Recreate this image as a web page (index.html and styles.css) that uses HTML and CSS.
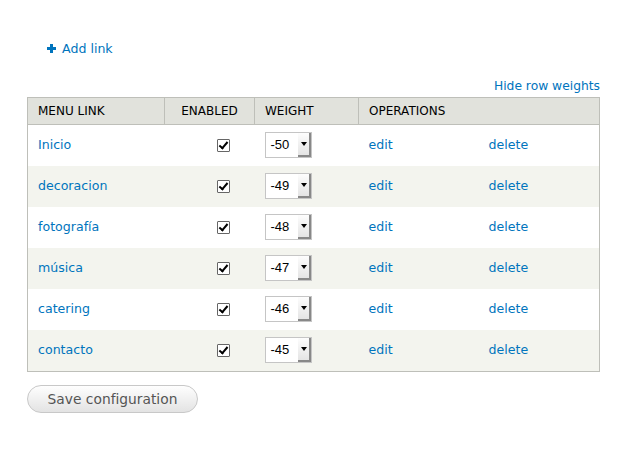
FILE: index.html
```html
<!DOCTYPE html>
<html lang="es">
<head>
    <meta charset="UTF-8">
    <title>Menu</title>
    <link rel="stylesheet" href="styles.css">
</head>
<body>

<main class="page">
    <ul class="action-links">
        <li>
            <a href="#" class="add-link">
                <svg class="plus" width="9" height="9" viewBox="0 0 9 9"><path d="M3 0h3v3h3v3H6v3H3V6H0V3h3z" fill="#0074bd"/></svg>
                Add link
            </a>
        </li>
    </ul>

    <div class="toggle-weights"><a href="#">Hide row weights</a></div>

    <table class="menu-table">
        <thead>
            <tr>
                <th class="col-link">Menu link</th>
                <th class="col-enabled">Enabled</th>
                <th class="col-weight">Weight</th>
                <th class="col-ops" colspan="2">Operations</th>
            </tr>
        </thead>
        <tbody>
            <tr>
                <td><a href="#">Inicio</a></td>
                <td class="center"><span class="check"></span></td>
                <td><span class="select">-50<i></i></span></td>
                <td><a href="#">edit</a></td>
                <td><a href="#">delete</a></td>
            </tr>
            <tr class="even">
                <td><a href="#">decoracion</a></td>
                <td class="center"><span class="check"></span></td>
                <td><span class="select">-49<i></i></span></td>
                <td><a href="#">edit</a></td>
                <td><a href="#">delete</a></td>
            </tr>
            <tr>
                <td><a href="#">fotografía</a></td>
                <td class="center"><span class="check"></span></td>
                <td><span class="select">-48<i></i></span></td>
                <td><a href="#">edit</a></td>
                <td><a href="#">delete</a></td>
            </tr>
            <tr class="even">
                <td><a href="#">música</a></td>
                <td class="center"><span class="check"></span></td>
                <td><span class="select">-47<i></i></span></td>
                <td><a href="#">edit</a></td>
                <td><a href="#">delete</a></td>
            </tr>
            <tr>
                <td><a href="#">catering</a></td>
                <td class="center"><span class="check"></span></td>
                <td><span class="select">-46<i></i></span></td>
                <td><a href="#">edit</a></td>
                <td><a href="#">delete</a></td>
            </tr>
            <tr class="even">
                <td><a href="#">contacto</a></td>
                <td class="center"><span class="check"></span></td>
                <td><span class="select">-45<i></i></span></td>
                <td><a href="#">edit</a></td>
                <td><a href="#">delete</a></td>
            </tr>
        </tbody>
    </table>

    <button type="button" class="save">Save configuration</button>
</main>

</body>
</html>
```

FILE: styles.css
```css
body {
    margin: 0;
    font-family: "DejaVu Sans", sans-serif;
    font-size: 12.6px;
    color: #333;
    background: #fff;
}
a {
    color: #0074bd;
    text-decoration: none;
}
.page {
    padding: 0 32px 0 27px;
}
.action-links {
    list-style: none;
    margin: 0;
    padding: 41px 0 0 20px;
    height: 39px;
}
.add-link {
    display: flex;
    align-items: center;
    gap: 6px;
}
.toggle-weights {
    text-align: right;
    height: 17px;
    line-height: 13px;
    font-size: 12.3px;
}
.menu-table {
    width: 573px;
    border-collapse: collapse;
    border: 1px solid #bebfb9;
}
.menu-table th {
    background: #e1e2dc;
    font-weight: normal;
    text-transform: uppercase;
    color: #000;
    font-size: 12px;
    text-align: left;
    height: 26px;
    padding: 0 10px;
    border-right: 1px solid #bebfb9;
    border-bottom: 1px solid #bebfb9;
}
.menu-table th.col-enabled {
    text-align: center;
}
.menu-table th.col-link { width: 116px; }
.menu-table th.col-enabled { width: 69px; }
.menu-table th.col-weight { width: 83px; }
.menu-table td {
    height: 39px;
    padding: 0 10px 2px;
    vertical-align: middle;
}
.menu-table td:nth-child(4) {
    width: 100px;
}
.menu-table tr.even td {
    background: #f3f4ee;
}
.menu-table td.center {
    text-align: right;
    padding-right: 25px;
}
.check {
    display: inline-block;
    vertical-align: middle;
    width: 11px;
    height: 11px;
    border: 1px solid #666;
    border-radius: 1px;
    background: #fff;
    position: relative;
}
.check::after {
    content: "";
    position: absolute;
    left: 3px;
    top: 0px;
    width: 3px;
    height: 7px;
    border: solid #000;
    border-width: 0 2px 2px 0;
    transform: rotate(40deg);
}
.select {
    display: inline-flex;
    align-items: center;
    box-sizing: border-box;
    width: 47px;
    height: 26px;
    border: 1px solid #c5c5c5;
    background: #fff;
    color: #000;
    font-family: "Liberation Sans", Arial, sans-serif;
    font-size: 13px;
    padding-left: 5px;
    position: relative;
}
.select i {
    position: absolute;
    right: 0;
    top: 0;
    bottom: 0;
    width: 13px;
    background: linear-gradient(#fdfdfd, #e4e4e4);
    border-right: 2px solid #888;
    border-bottom: 2px solid #888;
    box-sizing: border-box;
}
.select i::after {
    content: "";
    position: absolute;
    left: 3px;
    top: 9px;
    border: 3px solid transparent;
    border-top: 4px solid #000;
}
.save {
    margin-top: 13px;
    font-family: "DejaVu Sans", sans-serif;
    font-size: 13.8px;
    color: #555;
    height: 28px;
    width: 171px;
    border: 1px solid #c8c8c8;
    border-radius: 14px;
    background: linear-gradient(#fefefe, #e3e3e3);
}
```
